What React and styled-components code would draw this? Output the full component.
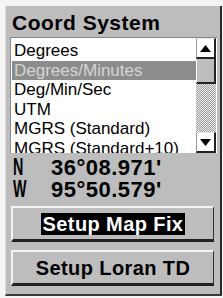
import React from "react"
import styled, { createGlobalStyle } from "styled-components"

const GlobalStyle = createGlobalStyle`
  html, body {
    margin: 0;
    padding: 0;
    background: #f4f4f4;
  }
  body {
    font-family: "Liberation Sans", Arial, sans-serif;
  }
`

const options = [
  "Degrees",
  "Degrees/Minutes",
  "Deg/Min/Sec",
  "UTM",
  "MGRS (Standard)",
  "MGRS (Standard+10)",
]

export default function App() {
  return (
    <>
      <GlobalStyle />
      <Panel>
        <Title>Coord System</Title>
        <ListBox>
          <Items>
            {options.map((opt, i) => (
              <Item key={opt} selected={i === 1}>
                {opt}
              </Item>
            ))}
          </Items>
          <ScrollBar>
            <ArrowButton>
              <svg width="11" height="7" viewBox="0 0 11 7">
                <polygon points="0,7 5.5,0 11,7" fill="#000" />
              </svg>
            </ArrowButton>
            <Thumb />
            <Track />
            <ArrowButton>
              <svg width="11" height="7" viewBox="0 0 11 7">
                <polygon points="0,0 11,0 5.5,7" fill="#000" />
              </svg>
            </ArrowButton>
          </ScrollBar>
        </ListBox>
        <Coords>
          <CoordRow>
            <Hemi>N</Hemi>
            <Value>36°08.971'</Value>
          </CoordRow>
          <CoordRow>
            <Hemi>W</Hemi>
            <Value>95°50.579'</Value>
          </CoordRow>
        </Coords>
        <Button>
          <Label focused>Setup Map Fix</Label>
        </Button>
        <Button>
          <Label>Setup Loran TD</Label>
        </Button>
      </Panel>
    </>
  )
}

const Panel = styled.div`
  box-sizing: border-box;
  margin: 6px 1px 0 5px;
  width: 217px;
  height: 290px;
  background: #bdbdbd;
  border-left: 1px solid #d8d8d8;
  border-right: 2px solid #2a2a2a;
  border-bottom: 2px solid #3a3a3a;
  padding: 0 3px 0 4px;
  display: flex;
  flex-direction: column;
`

const Title = styled.div`
  font-size: 21px;
  font-weight: bold;
  color: #000;
  letter-spacing: 0.5px;
  padding: 5px 0 0 2px;
  height: 26px;
`

const ListBox = styled.div`
  display: flex;
  height: 115px;
  flex-shrink: 0;
  background: #fff;
  border-top: 1px solid #8a8a8a;
  border-left: 1px solid #8a8a8a;
  overflow: hidden;
`

const Items = styled.div`
  flex: 1;
  padding: 3px 0 0 1px;
  overflow: hidden;
`

const Item = styled.div`
  font-size: 17px;
  line-height: 19.6px;
  height: 19.6px;
  padding-left: 2px;
  white-space: nowrap;
  color: ${p => (p.selected ? "#d4d4d4" : "#000")};
  background: ${p => (p.selected ? "#8c8c8c" : "transparent")};
`

const ScrollBar = styled.div`
  width: 20px;
  margin-right: 1px;
  display: flex;
  flex-direction: column;
`

const ArrowButton = styled.div`
  box-sizing: border-box;
  height: 21px;
  background: #fff;
  border-top: 1px solid #e8e8e8;
  border-left: 1px solid #9a9a9a;
  border-right: 2px solid #222;
  border-bottom: 2px solid #222;
  display: flex;
  align-items: center;
  justify-content: center;
`

const Thumb = styled.div`
  box-sizing: border-box;
  height: 25px;
  background: #bdbdbd;
  border-left: 1px solid #fff;
  border-right: 2px solid #222;
  border-bottom: 2px solid #222;
`

const Track = styled.div`
  flex: 1;
  background: repeating-conic-gradient(#9a9a9a 0 25%, #f0f0f0 0 50%) 0 0 / 2px 2px;
`

const Coords = styled.div`
  padding: 4px 0 0 3px;
  height: 46px;
  box-sizing: border-box;
`

const CoordRow = styled.div`
  display: flex;
  align-items: center;
  height: 22px;
  overflow: visible;
`

const Hemi = styled.span`
  display: inline-block;
  width: 38px;
  font-size: 22px;
  line-height: 22px;
  font-weight: bold;
  color: #000;
  transform: scale(0.65, 1.05);
  transform-origin: left center;
`

const Value = styled.span`
  font-size: 22px;
  line-height: 22px;
  font-weight: bold;
  letter-spacing: 0.5px;
  color: #000;
`

const Button = styled.div`
  box-sizing: border-box;
  margin: 7px 0 0 1px;
  width: 203px;
  height: 36px;
  flex-shrink: 0;
  border-top: 2px solid #f4f4f4;
  border-left: 2px solid #f4f4f4;
  border-right: 1px solid #333;
  border-bottom: 3px solid #222;
  display: flex;
  align-items: center;
  justify-content: center;
  & + & {
    margin-top: 8px;
  }
`

const Label = styled.span`
  font-size: 20px;
  font-weight: bold;
  letter-spacing: 0.4px;
  line-height: 22px;
  padding: 0 2px;
  color: ${p => (p.focused ? "#fff" : "#000")};
  background: ${p => (p.focused ? "#000" : "transparent")};
`
